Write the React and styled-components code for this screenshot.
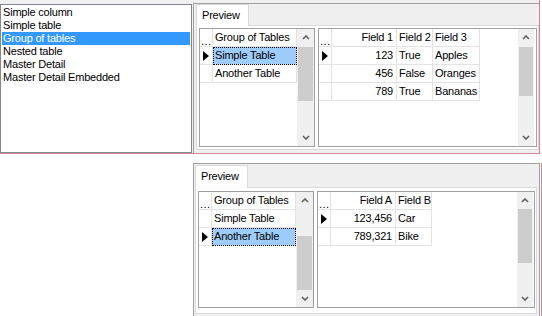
import React from "react";
import styled, { createGlobalStyle } from "styled-components";

const GlobalStyle = createGlobalStyle`
  * { box-sizing: border-box; }
  html, body { margin: 0; padding: 0; background: #fff; }
  body {
    font-family: "Liberation Sans", Arial, sans-serif;
    font-size: 11px;
    letter-spacing: -0.2px;
    color: #000;
  }
`;

const Screen = styled.div`
  width: 542px;
  height: 316px;
  overflow: hidden;
  background: #fff;
`;

const TopFrame = styled.div`
  display: flex;
  align-items: flex-start;
  gap: 1px;
  width: 540px;
  height: 154px;
  background: #f0f0f0;
  border-right: 1px solid #cf8690;
  border-bottom: 1px solid #cf8690;
`;

const ListBox = styled.ul`
  list-style: none;
  margin: 4px 0 0;
  width: 192px;
  height: 149px;
  padding: 1px;
  background: #fff;
  border: 1px solid #828790;
`;

const ListItem = styled.li`
  height: 13px;
  line-height: 13px;
  padding-left: 1px;
  white-space: nowrap;
  background: ${(p) => (p.$selected ? "#3399ff" : "transparent")};
  color: ${(p) => (p.$selected ? "#fff" : "#000")};
`;

const RightPanel = styled.div`
  margin-top: 3px;
  width: 346px;
  height: 150px;
  border-top: 1px solid #a0a0a0;
  border-left: 1px solid #a0a0a0;
  padding-left: 2px;
`;

const BottomFrame = styled.div`
  margin: 9px 0 0 193px;
  width: 349px;
  height: 153px;
  padding-right: 1px;
  border-right: 1px solid #cf8690;
`;

const BottomPanel = styled.div`
  width: 347px;
  height: 153px;
  background: #f0f0f0;
  border: 1px solid #a0a0a0;
  border-bottom: none;
  padding: 1px 0 0 1px;
`;

const TabStrip = styled.div`
  display: flex;
  height: ${(p) => p.$h}px;
`;

const Tab = styled.div`
  position: relative;
  z-index: 1;
  width: 53px;
  height: ${(p) => p.$h + 1}px;
  line-height: ${(p) => p.$h - 1}px;
  padding-left: 5px;
  background: #fff;
  border: 1px solid #d9d9d9;
  border-bottom: none;
`;

const TabPage = styled.div`
  display: flex;
  gap: 3px;
  width: ${(p) => p.$w}px;
  height: ${(p) => p.$h}px;
  padding: ${(p) => p.$pad};
  background: #fff;
  border: 1px solid #d9d9d9;
`;

const GridBox = styled.div`
  display: flex;
  width: ${(p) => p.$w}px;
  border: 1px solid #a0a0a0;
  background: #fff;
  padding-right: ${(p) => p.$gap}px;
`;

const GridBody = styled.div`
  flex: 1;
  overflow: hidden;
`;

const Row = styled.div`
  display: flex;
`;

const Cell = styled.div`
  width: ${(p) => p.$w}px;
  height: 18px;
  line-height: 17px;
  padding: 0 3px 0 2px;
  text-align: ${(p) => p.$align || "left"};
  white-space: nowrap;
  overflow: hidden;
  border-right: 1px solid #e3e3e3;
  border-bottom: 1px solid #e3e3e3;
  background: ${(p) => (p.$focused ? "#9fcdfb" : "transparent")};
  outline: ${(p) => (p.$focused ? "1px dotted #000" : "none")};
  outline-offset: -1px;
`;

const Indicator = styled.div`
  display: flex;
  align-items: center;
  width: 13px;
  height: 18px;
  padding-left: 3px;
  border-right: 1px solid #e3e3e3;
  border-bottom: 1px solid #e3e3e3;
`;

const Dots = styled.span`
  align-self: flex-end;
  margin-left: -2px;
  line-height: 10px;
  letter-spacing: 0.4px;
`;

const ScrollBar = styled.div`
  display: flex;
  flex-direction: column;
  width: ${(p) => p.$w}px;
  background: #f0f0f0;
`;

const ArrowButton = styled.div`
  display: flex;
  align-items: center;
  justify-content: center;
  height: 17px;
  flex: none;
`;

const Thumb = styled.div`
  flex: none;
  margin: ${(p) => p.$top}px 1px 0;
  height: ${(p) => p.$h}px;
  background: #cdcdcd;
`;

const Track = styled.div`
  flex: 1;
`;

const Chevron = ({ down }) => (
  <svg width="8" height="5" viewBox="0 0 8 5">
    <path
      d={down ? "M1 1 L4 4 L7 1" : "M1 4 L4 1 L7 4"}
      fill="none"
      stroke="#606060"
      strokeWidth="1.6"
    />
  </svg>
);

const Pointer = () => (
  <svg width="6" height="10" viewBox="0 0 6 10">
    <polygon points="0,0 6,5 0,10" fill="#000" />
  </svg>
);

function DataGrid({ width, gap = 0, columns, rows, current, focusCol, scroll }) {
  return (
    <GridBox $w={width} $gap={gap}>
      <GridBody>
        <Row>
          <Indicator>
            <Dots>...</Dots>
          </Indicator>
          {columns.map((c) => (
            <Cell key={c.title} $w={c.w} $align={c.align}>
              {c.title}
            </Cell>
          ))}
        </Row>
        {rows.map((r, i) => (
          <Row key={i}>
            <Indicator>{i === current && <Pointer />}</Indicator>
            {r.map((v, j) => (
              <Cell
                key={j}
                $w={columns[j].w}
                $align={columns[j].align}
                $focused={i === current && j === focusCol}
              >
                {v}
              </Cell>
            ))}
          </Row>
        ))}
      </GridBody>
      <ScrollBar $w={scroll.w}>
        <ArrowButton>
          <Chevron />
        </ArrowButton>
        <Thumb $top={scroll.top} $h={scroll.h} />
        <Track />
        <ArrowButton>
          <Chevron down />
        </ArrowButton>
      </ScrollBar>
    </GridBox>
  );
}

const examples = [
  "Simple column",
  "Simple table",
  "Group of tables",
  "Nested table",
  "Master Detail",
  "Master Detail Embedded",
];

const groupCols = [{ title: "Group of Tables", w: 84 }];
const groupRows = [["Simple Table"], ["Another Table"]];

const simpleCols = [
  { title: "Field 1", w: 65, align: "right" },
  { title: "Field 2", w: 36 },
  { title: "Field 3", w: 47 },
];
const simpleRows = [
  ["123", "True", "Apples"],
  ["456", "False", "Oranges"],
  ["789", "True", "Bananas"],
];

const anotherCols = [
  { title: "Field A", w: 65, align: "right" },
  { title: "Field B", w: 36 },
];
const anotherRows = [
  ["123,456", "Car"],
  ["789,321", "Bike"],
];

export default function App() {
  return (
    <Screen>
      <GlobalStyle />
      <TopFrame>
        <ListBox>
          {examples.map((e) => (
            <ListItem key={e} $selected={e === "Group of tables"}>
              {e}
            </ListItem>
          ))}
        </ListBox>
        <RightPanel>
          <TabStrip $h={21}>
            <Tab $h={21}>Preview</Tab>
          </TabStrip>
          <TabPage $w={343} $h={125} $pad="2px 1px 2px 2px">
            <DataGrid
              width={116}
              columns={groupCols}
              rows={groupRows}
              current={0}
              focusCol={0}
              scroll={{ w: 17, top: 1, h: 54 }}
            />
            <DataGrid
              width={219}
              gap={2}
              columns={simpleCols}
              rows={simpleRows}
              current={0}
              scroll={{ w: 16, top: 1, h: 49 }}
            />
          </TabPage>
        </RightPanel>
      </TopFrame>
      <BottomFrame>
        <BottomPanel>
          <TabStrip $h={22}>
            <Tab $h={22}>Preview</Tab>
          </TabStrip>
          <TabPage $w={342} $h={127} $pad="3px 1px 5px 2px">
            <DataGrid
              width={116}
              columns={groupCols}
              rows={groupRows}
              current={1}
              focusCol={0}
              scroll={{ w: 17, top: 27, h: 54 }}
            />
            <DataGrid
              width={218}
              gap={1}
              columns={anotherCols}
              rows={anotherRows}
              current={0}
              scroll={{ w: 16, top: 0, h: 54 }}
            />
          </TabPage>
        </BottomPanel>
      </BottomFrame>
    </Screen>
  );
}
